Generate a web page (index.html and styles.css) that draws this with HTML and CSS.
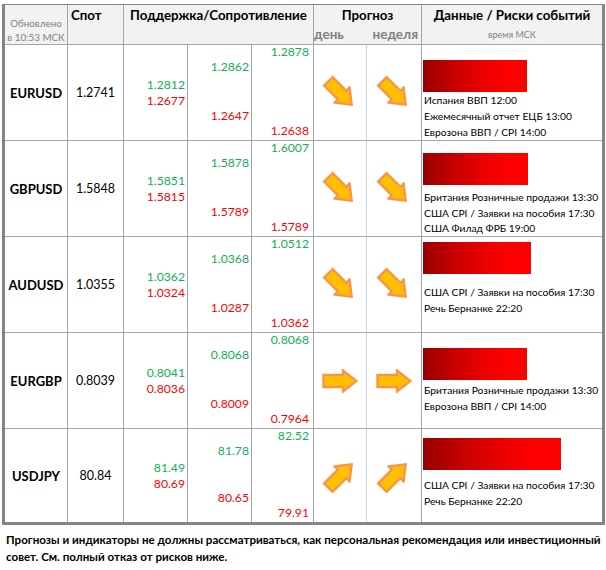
FILE: index.html
```html
<!DOCTYPE html>
<html lang="ru">
<head>
<meta charset="utf-8">
<title>Прогноз</title>
<link rel="stylesheet" href="styles.css">
</head>
<body>
<svg class="defs" width="0" height="0" aria-hidden="true">
  <symbol id="arrow" viewBox="0 0 36 24">
    <polygon points="1.5,6 21,6 21,1.5 34.5,12 21,22.5 21,18 1.5,18" fill="#ffc000" stroke="#f79646" stroke-width="2.4" stroke-linejoin="miter"/>
  </symbol>
</svg>
<div class="page">
  <div class="board">
    <div class="h h-upd">Обновлено<br>в 10:53 МСК</div>
    <div class="h h-spot">Спот</div>
    <div class="h h-sr">Поддержка/Сопротивление</div>
    <div class="h h-fc">
      <div class="h-title">Прогноз</div>
      <div class="h-sub"><span>день</span><span>неделя</span></div>
    </div>
    <div class="h h-data">
      <div class="h-title">Данные / Риски событий</div>
      <div class="h-msk">время МСК</div>
    </div>

    <!-- EURUSD -->
    <div class="c pair">EURUSD</div>
    <div class="c spot">1.2741</div>
    <div class="c lv lv3"><span class="up">1.2812</span><span class="dn">1.2677</span></div>
    <div class="c lv lv4"><span class="up">1.2862</span><span class="dn">1.2647</span></div>
    <div class="c lv lv5"><span class="up">1.2878</span><span class="dn">1.2638</span></div>
    <div class="c fc">
      <div class="fc-day"><svg class="arr arr--down" width="36" height="24"><use href="#arrow"/></svg></div>
      <div class="fc-week"><svg class="arr arr--down" width="36" height="24"><use href="#arrow"/></svg></div>
    </div>
    <div class="c ev ev--a">
      <div class="bar" style="width:104px"></div>
      <div class="ev-list">
        <div>Испания ВВП 12:00</div>
        <div>Ежемесячный отчет ЕЦБ 13:00</div>
        <div>Еврозона ВВП / CPI 14:00</div>
      </div>
    </div>

    <!-- GBPUSD -->
    <div class="c pair">GBPUSD</div>
    <div class="c spot">1.5848</div>
    <div class="c lv lv3"><span class="up">1.5851</span><span class="dn">1.5815</span></div>
    <div class="c lv lv4"><span class="up">1.5878</span><span class="dn">1.5789</span></div>
    <div class="c lv lv5"><span class="up">1.6007</span><span class="dn">1.5789</span></div>
    <div class="c fc">
      <div class="fc-day"><svg class="arr arr--down" width="36" height="24"><use href="#arrow"/></svg></div>
      <div class="fc-week"><svg class="arr arr--down" width="36" height="24"><use href="#arrow"/></svg></div>
    </div>
    <div class="c ev ev--b">
      <div class="bar" style="width:105px"></div>
      <div class="ev-list">
        <div>Британия Розничные продажи 13:30</div>
        <div>США CPI / Заявки на пособия 17:30</div>
        <div>США Филад ФРБ 19:00</div>
      </div>
    </div>

    <!-- AUDUSD -->
    <div class="c pair">AUDUSD</div>
    <div class="c spot">1.0355</div>
    <div class="c lv lv3"><span class="up">1.0362</span><span class="dn">1.0324</span></div>
    <div class="c lv lv4"><span class="up">1.0368</span><span class="dn">1.0287</span></div>
    <div class="c lv lv5"><span class="up">1.0512</span><span class="dn">1.0362</span></div>
    <div class="c fc">
      <div class="fc-day"><svg class="arr arr--down" width="36" height="24"><use href="#arrow"/></svg></div>
      <div class="fc-week"><svg class="arr arr--down" width="36" height="24"><use href="#arrow"/></svg></div>
    </div>
    <div class="c ev ev--c">
      <div class="bar" style="width:108px"></div>
      <div class="ev-list">
        <div>США CPI / Заявки на пособия 17:30</div>
        <div>Речь Бернанке 22:20</div>
      </div>
    </div>

    <!-- EURGBP -->
    <div class="c pair">EURGBP</div>
    <div class="c spot">0.8039</div>
    <div class="c lv lv3"><span class="up">0.8041</span><span class="dn">0.8036</span></div>
    <div class="c lv lv4"><span class="up">0.8068</span><span class="dn">0.8009</span></div>
    <div class="c lv lv5"><span class="up">0.8068</span><span class="dn">0.7964</span></div>
    <div class="c fc">
      <div class="fc-day"><svg class="arr" width="36" height="24"><use href="#arrow"/></svg></div>
      <div class="fc-week"><svg class="arr" width="36" height="24"><use href="#arrow"/></svg></div>
    </div>
    <div class="c ev ev--d">
      <div class="bar" style="width:104px"></div>
      <div class="ev-list">
        <div>Британия Розничные продажи 13:30</div>
        <div>Еврозона ВВП / CPI 14:00</div>
      </div>
    </div>

    <!-- USDJPY -->
    <div class="c pair">USDJPY</div>
    <div class="c spot">80.84</div>
    <div class="c lv lv3"><span class="up">81.49</span><span class="dn">80.69</span></div>
    <div class="c lv lv4"><span class="up">81.78</span><span class="dn">80.65</span></div>
    <div class="c lv lv5"><span class="up">82.52</span><span class="dn">79.91</span></div>
    <div class="c fc">
      <div class="fc-day"><svg class="arr arr--up" width="36" height="24"><use href="#arrow"/></svg></div>
      <div class="fc-week"><svg class="arr arr--up" width="36" height="24"><use href="#arrow"/></svg></div>
    </div>
    <div class="c ev ev--e">
      <div class="bar" style="width:138px"></div>
      <div class="ev-list">
        <div>США CPI / Заявки на пособия 17:30</div>
        <div>Речь Бернанке 22:20</div>
      </div>
    </div>
  </div>
  <p class="note">Прогнозы и индикаторы не должны рассматриваться, как персональная рекомендация или инвестиционный совет. См. полный отказ от рисков ниже.</p>
</div>
</body>
</html>
```

FILE: styles.css
```css
html, body {
  margin: 0;
  padding: 0;
  background: #fff;
}
body {
  font-family: "Lato", "Open Sans", sans-serif;
  color: #000;
}
.defs {
  position: absolute;
  width: 0;
  height: 0;
  overflow: hidden;
}
.page {
  width: 606px;
  height: 570px;
  padding: 4px 0 0 2px;
  box-sizing: border-box;
}
.board {
  display: grid;
  grid-template-columns: 62px 55px 63px 63px 61px 107px 180px;
  grid-template-rows: 39px 95px 95px 95px 95px 93px;
  gap: 1px;
  background: #a5a5a5;
  border: 3px solid #858585;
  border-top-width: 1px;
  width: max-content;
}
.h {
  background: #f2f2f2;
}
.c {
  background: #fff;
}
.h-upd {
  display: flex;
  flex-direction: column;
  justify-content: flex-end;
  align-items: center;
  text-align: center;
  color: #808080;
  font-size: 9.8px;
  line-height: 14px;
}
.h-spot {
  font-weight: 700;
  font-size: 13.3px;
  line-height: 18px;
  padding: 1px 0 0 3px;
}
.h-sr {
  grid-column: span 3;
  font-weight: 700;
  font-size: 13.3px;
  line-height: 18px;
  padding-top: 1px;
  text-align: center;
}
.h-title {
  font-weight: 700;
  font-size: 13.3px;
  line-height: 18px;
  padding-top: 1px;
  text-align: center;
}
.h-sub {
  display: flex;
  justify-content: space-between;
  color: #7f7f7f;
  font-weight: 700;
  font-size: 13.5px;
  line-height: 18px;
  padding: 1px 3px 0 0;
}
.h-msk {
  text-align: center;
  color: #808080;
  font-size: 9px;
  line-height: 12px;
  padding-top: 5px;
}
.pair {
  display: flex;
  align-items: center;
  justify-content: center;
  font-weight: 700;
  font-size: 13px;
}
.spot {
  display: flex;
  align-items: center;
  justify-content: center;
  font-size: 12.5px;
}
.lv {
  display: flex;
  flex-direction: column;
  align-items: flex-end;
  font-size: 12.2px;
  padding-right: 2px;
}
.up { color: #12b056; }
.dn { color: #ff0000; }
.lv3 {
  justify-content: center;
  line-height: 16px;
  padding-top: 1px;
}
.lv4 {
  justify-content: space-between;
  line-height: 16px;
  padding: 14px 2px 16px 0;
}
.lv5 {
  justify-content: space-between;
  line-height: 14px;
  padding: 0 4px 2px 0;
}
.fc {
  display: flex;
}
.fc-day,
.fc-week {
  display: flex;
  align-items: center;
  justify-content: center;
}
.fc-day {
  width: 52px;
}
.fc-week {
  flex: 1;
  border-left: 1px solid #c5d3e6;
}
.arr {
  display: block;
  overflow: visible;
}
.arr--down { transform: rotate(45deg); }
.arr--up { transform: rotate(-45deg); }
.ev {
  padding-left: 1px;
  font-size: 10.3px;
  line-height: 16px;
}
.bar {
  height: 32px;
  background: linear-gradient(to right, #990000 0%, #c80000 30%, #ee0000 60%, #ff0000 82%);
}
.ev-list {
  padding-left: 1px;
}
.ev--a { padding-top: 15px; }
.ev--b { padding-top: 12px; }
.ev--b .ev-list { padding-top: 5px; line-height: 15.5px; }
.ev--c { padding-top: 5px; }
.ev--c .ev-list { padding-top: 10px; }
.ev--d { padding-top: 15px; }
.ev--d .ev-list { padding-top: 2px; }
.ev--e { padding-top: 9px; }
.ev--e .ev-list { padding-top: 7px; }
.note {
  margin: 6px 0 0 4px;
  font-size: 11.6px;
  font-weight: 700;
  line-height: 17px;
}
```
